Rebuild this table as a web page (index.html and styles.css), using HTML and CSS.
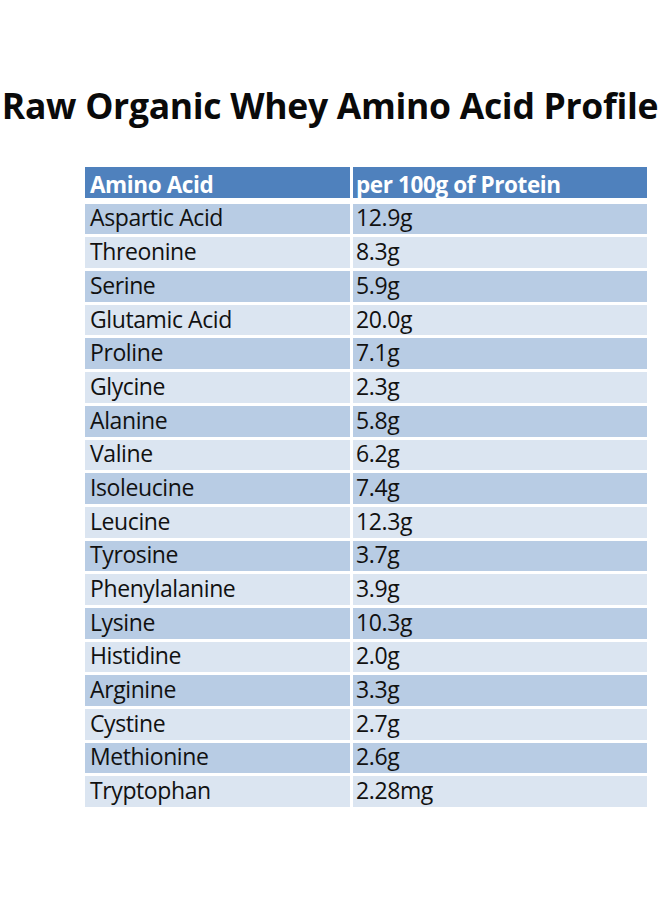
FILE: index.html
```html
<!DOCTYPE html>
<html>
<head>
<meta charset="utf-8">
<link rel="stylesheet" href="styles.css">
</head>
<body>
<h1 class="title">Raw Organic Whey Amino Acid Profile</h1>
<table class="profile">
<thead>
<tr><th class="c1">Amino Acid</th><th class="c2">per 100g of Protein</th></tr>
</thead>
<tbody>
<tr class="odd"><td>Aspartic Acid</td><td>12.9g</td></tr>
<tr class="even"><td>Threonine</td><td>8.3g</td></tr>
<tr class="odd"><td>Serine</td><td>5.9g</td></tr>
<tr class="even"><td>Glutamic Acid</td><td>20.0g</td></tr>
<tr class="odd"><td>Proline</td><td>7.1g</td></tr>
<tr class="even"><td>Glycine</td><td>2.3g</td></tr>
<tr class="odd"><td>Alanine</td><td>5.8g</td></tr>
<tr class="even"><td>Valine</td><td>6.2g</td></tr>
<tr class="odd"><td>Isoleucine</td><td>7.4g</td></tr>
<tr class="even"><td>Leucine</td><td>12.3g</td></tr>
<tr class="odd"><td>Tyrosine</td><td>3.7g</td></tr>
<tr class="even"><td>Phenylalanine</td><td>3.9g</td></tr>
<tr class="odd"><td>Lysine</td><td>10.3g</td></tr>
<tr class="even"><td>Histidine</td><td>2.0g</td></tr>
<tr class="odd"><td>Arginine</td><td>3.3g</td></tr>
<tr class="even"><td>Cystine</td><td>2.7g</td></tr>
<tr class="odd"><td>Methionine</td><td>2.6g</td></tr>
<tr class="even"><td>Tryptophan</td><td>2.28mg</td></tr>
</tbody>
</table>
</body>
</html>
```
FILE: styles.css
```css
html, body {
  margin: 0;
  padding: 0;
  background: #ffffff;
}
body {
  font-family: "Open Sans", "Liberation Sans", sans-serif;
  color: #111111;
  width: 660px;
}
.title {
  margin: 0;
  padding-top: 84px;
  height: 42px;
  line-height: 42px;
  font-size: 35.5px;
  font-weight: 700;
  text-align: center;
  white-space: nowrap;
  letter-spacing: -0.3px;
  color: #0a0a0a;
}
.profile {
  margin: 38px 0 0 82px;
  border-collapse: separate;
  border-spacing: 3px;
  table-layout: fixed;
  width: 568px;
}
.profile th, .profile td {
  box-sizing: border-box;
  text-align: left;
  vertical-align: top;
  white-space: nowrap;
}
.profile td {
  height: 30.7px;
  padding: 0.8px 0 0 5px;
  font-size: 23px;
  line-height: 27px;
  letter-spacing: -0.4px;
}
.profile td + td {
  padding-left: 3px;
}
.c1 { width: 265px; }
.c2 { width: 294px; }
.profile th {
  height: 33.3px;
  padding: 3.7px 0 0 5px;
  border-bottom: 3.3px solid #ffffff;
  background: #4f81bd;
  color: #ffffff;
  font-weight: 700;
  font-size: 22.5px;
  line-height: 27px;
  letter-spacing: -0.4px;
}
.profile th + th {
  padding-left: 3px;
}
.odd td { background: #b8cce4; }
.even td { background: #dbe5f1; }
```
